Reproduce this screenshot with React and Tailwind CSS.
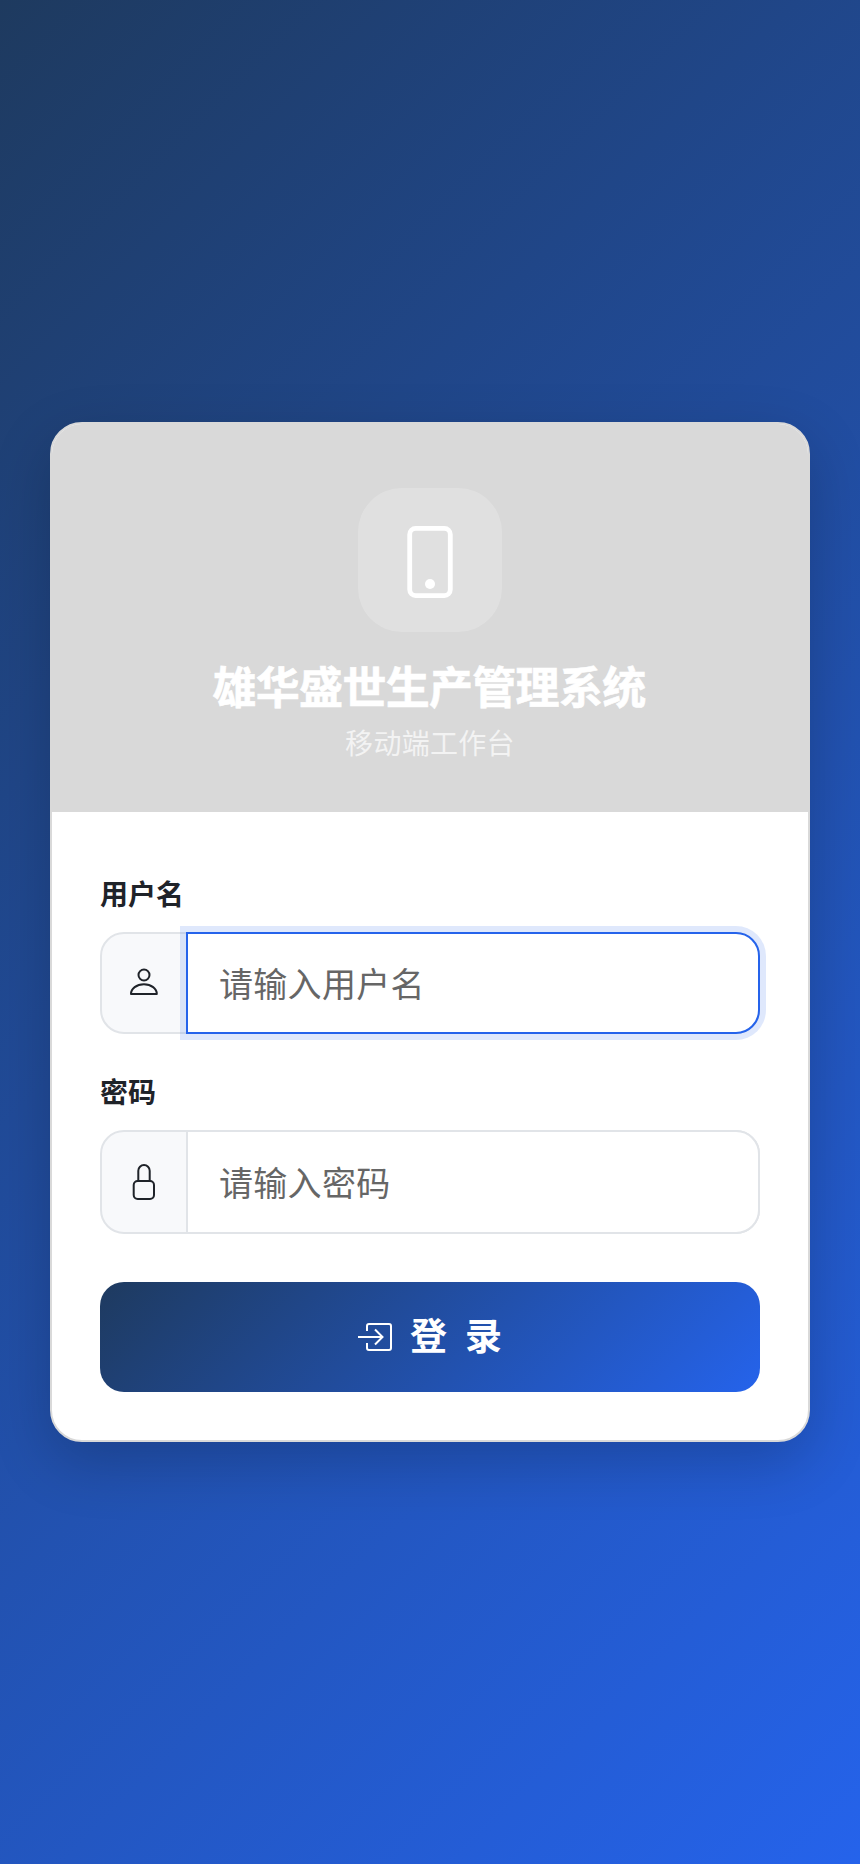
import { useState } from 'react';

const cjk = "font-['Noto_Sans_CJK_SC','Liberation_Sans',sans-serif]";

function PhoneIcon() {
  return (
    <svg width="72" height="76" viewBox="0 0 72 76" fill="none" stroke="white" strokeWidth="4.8">
      <rect x="15.700" y="6.400" width="40.600" height="67.200" rx="6" />
      <circle cx="36" cy="62" r="5" fill="white" stroke="none" />
    </svg>
  );
}

function UserIcon() {
  return (
    <svg width="32" height="32" viewBox="0 0 32 32" fill="none" stroke="#1f2329" strokeWidth="2">
      <circle cx="16" cy="8" r="5.500" />
      <path d="M3 27c0-5.500 5.500-9.700 12.900-9.700s12.900 4.200 12.900 9.700z" strokeLinejoin="round" />
    </svg>
  );
}

function LockIcon() {
  return (
    <svg width="32" height="40" viewBox="0 0 32 40" fill="none" stroke="#1f2329" strokeWidth="2">
      <path d="M10.300 19V8.700a5.700 5.700 0 0 1 11.400 0V19" />
      <rect x="5.700" y="19" width="20.300" height="18" rx="4" />
    </svg>
  );
}

function LoginIcon() {
  return (
    <svg width="34" height="28" viewBox="0 0 34 28" fill="none" stroke="white" strokeWidth="2">
      <path d="M9 8V3a2 2 0 0 1 2-2h20a2 2 0 0 1 2 2v22a2 2 0 0 1-2 2H11a2 2 0 0 1-2-2v-5" />
      <path d="M0 14h24M17 6.500l7.500 7.500-7.500 7.500" />
    </svg>
  );
}

function Field({ label, placeholder, icon, focused, type = 'text', className = '' }) {
  return (
    <div className={className}>
      <label className="block text-[28px] leading-[42px] font-semibold text-[#1f2329] mb-[18px]">{label}</label>
      <div className={'flex rounded-[24px] border-2 border-[#e1e4e8] bg-[#f8f9fb] ' + (focused ? 'h-[102px]' : 'h-[104px]')}>
        <div className="w-[84px] shrink-0 flex items-center justify-center">{icon}</div>
        <input
          type={type}
          autoFocus={focused}
          placeholder={placeholder}
          className={
            'flex-1 min-w-0 -my-[2px] -mr-[2px] pl-[31px] pb-[2px] bg-white text-[34px] tracking-[0.3px] rounded-r-[24px] outline-none placeholder:text-[#666666] border-2 ' +
            (focused
              ? 'border-[#2563eb] shadow-[0_0_0_6px_rgba(37,99,235,0.15)]'
              : 'border-[#e1e4e8]')
          }
        />
      </div>
    </div>
  );
}

export default function App() {
  const [busy] = useState(false);

  return (
    <div className={`${cjk} min-h-[1864px] px-[50px] flex items-center bg-[linear-gradient(135deg,#1e3a5f_0%,#2563eb_100%)]`}>
      <div className="w-full bg-white rounded-[32px] border-2 border-[#d9d9d9] overflow-hidden shadow-[0_20px_60px_rgba(0,0,0,0.2)]">
        {/* Header */}
        <div className="bg-[#d9d9d9] pt-[64px] pb-[49px] flex flex-col items-center text-white">
          <div className="w-[144px] h-[144px] rounded-[44px] bg-white/20 flex items-center justify-center mb-[20px]">
            <PhoneIcon />
          </div>
          <h1 className="pr-[2px] text-[44px] leading-[66px] font-bold tracking-[-0.7px] [-webkit-text-stroke:0.6px_white]">雄华盛世生产管理系统</h1>
          <p className="mt-[3px] text-[28px] leading-[42px] tracking-[0.3px] text-white/70">移动端工作台</p>
        </div>

        {/* Form */}
        <div className="px-[48px] pt-[60px] pb-[48px]">
          <Field label="用户名" placeholder="请输入用户名" icon={<UserIcon />} focused />
          <Field label="密码" placeholder="请输入密码" icon={<LockIcon />} type="password" className="mt-[36px]" />
          <button
            disabled={busy}
            className="mt-[48px] w-full h-[110px] rounded-[24px] flex items-center justify-center gap-[18px] text-white text-[37px] font-bold tracking-[4.85px] bg-[linear-gradient(135deg,#1e3a5f_0%,#2563eb_100%)]"
          >
            <LoginIcon />
            <span className="pb-[4px] -mr-[5px]">登 录</span>
          </button>
        </div>
      </div>
    </div>
  );
}
